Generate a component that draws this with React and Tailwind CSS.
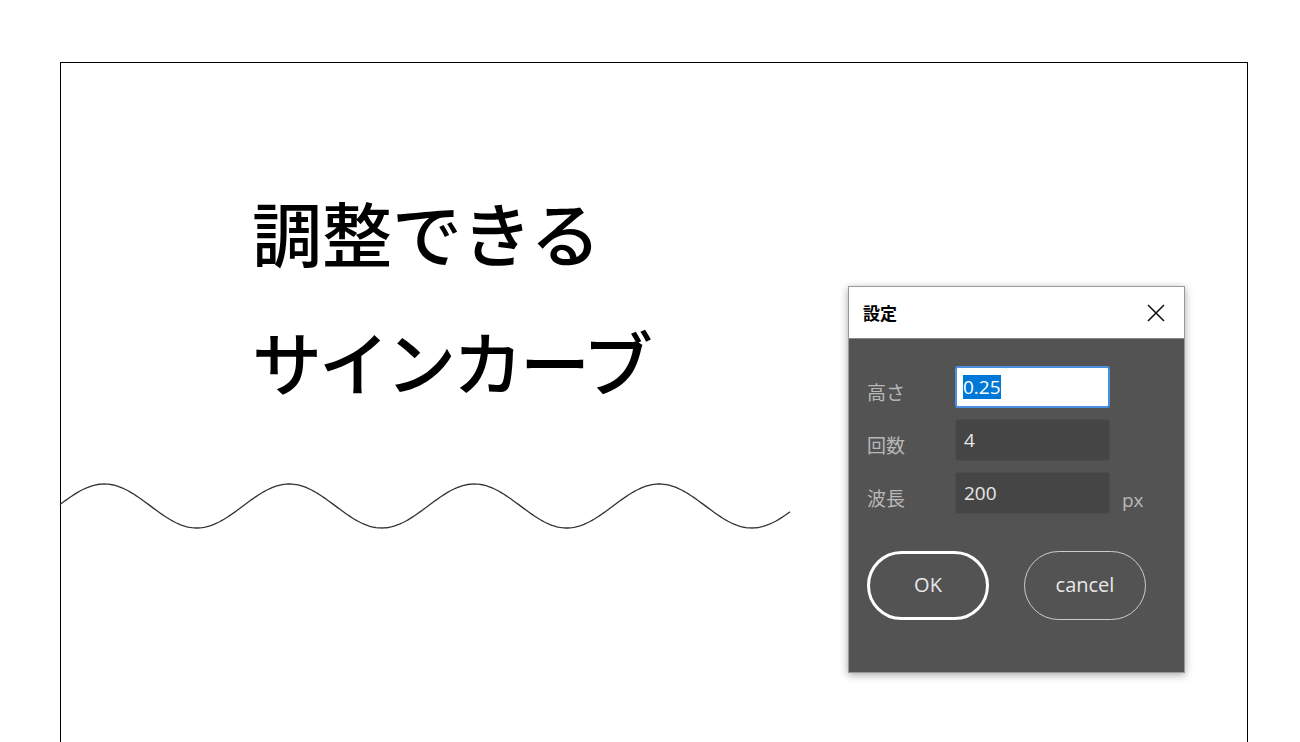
export default function App() {
  const pts = [];
  for (let x = 60; x <= 790; x += 2) {
    const y = 506 - 22 * Math.sin((2 * Math.PI * (x - 58)) / 185);
    pts.push(`${x},${y.toFixed(2)}`);
  }
  const f = { fontFamily: '"Noto Sans CJK JP", "Noto Sans", sans-serif' };
  return (
    <div className="relative w-[1300px] h-[742px] bg-white overflow-hidden" style={f}>
      <div className="absolute left-[60px] top-[62px] w-[1188px] h-[700px] border border-black" />
      <div className="absolute left-[252px] top-[167px] text-[70px] leading-[129px] font-medium text-black">
        <div>調整できる</div>
        <div className="tracking-[-3px]">サインカーブ</div>
      </div>
      <svg className="absolute left-0 top-0" width="1300" height="742">
        <polyline points={pts.join(" ")} fill="none" stroke="#333" strokeWidth="1.3" />
      </svg>
      <div className="absolute left-[848px] top-[286px] w-[337px] h-[387px] bg-[#535353] border border-[#999] shadow-[0_2px_8px_rgba(0,0,0,0.35)] flex flex-col">
        <div className="h-[52px] bg-white flex items-center justify-between pl-[14px] pr-[18px] border-b border-[#888]">
          <span className="text-[17px] font-bold text-black">設定</span>
          <svg width="20" height="20" viewBox="0 0 20 20"><path d="M2 2L18 18M18 2L2 18" stroke="#111" strokeWidth="1.6" /></svg>
        </div>
        <div className="pl-[18px] pt-[27px] flex flex-col gap-[11px] text-[#b8b8b8] text-[19px]">
          <div className="flex items-center">
            <span className="w-[88px] pt-[10px]">高さ</span>
            <div className="w-[155px] h-[42px] bg-white border-2 border-[#4a90e2] rounded-[3px] flex items-center pl-[6px]">
              <span className="bg-[#0078d7] text-white text-[19px] leading-[24px]" style={{ fontFamily: '"Open Sans", sans-serif' }}>0.25</span>
            </div>
          </div>
          <div className="flex items-center">
            <span className="w-[88px] pt-[10px]">回数</span>
            <div className="w-[155px] h-[42px] bg-[#454545] border border-[#4c4c4c] rounded-[3px] flex items-center pl-[8px] text-[#e8e8e8]" style={{ fontFamily: '"Open Sans", sans-serif' }}>4</div>
          </div>
          <div className="flex items-center">
            <span className="w-[88px] pt-[10px]">波長</span>
            <div className="w-[155px] h-[42px] bg-[#454545] border border-[#4c4c4c] rounded-[3px] flex items-center pl-[8px] text-[#e8e8e8]" style={{ fontFamily: '"Open Sans", sans-serif' }}>200</div>
            <span className="ml-[12px] pt-[14px]" style={{ fontFamily: '"Open Sans", sans-serif' }}>px</span>
          </div>
          <div className="flex gap-[35px] mt-[25px] text-[20px] text-[#e8e8e8]" style={{ fontFamily: '"Open Sans", sans-serif' }}>
            <div className="w-[122px] h-[69px] rounded-full border-[3px] border-white flex items-center justify-center">OK</div>
            <div className="w-[122px] h-[69px] rounded-full border border-[#ccc] flex items-center justify-center">cancel</div>
          </div>
        </div>
      </div>
    </div>
  );
}
